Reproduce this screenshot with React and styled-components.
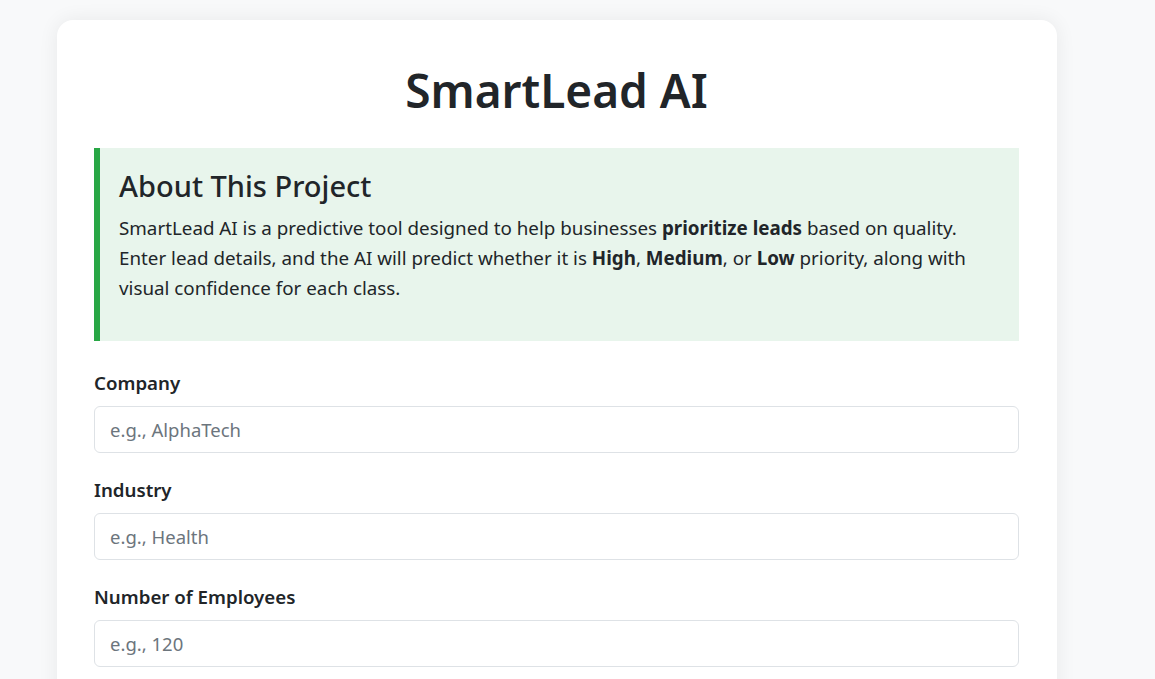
import React from 'react';
import styled, { createGlobalStyle } from 'styled-components';

const GlobalStyle = createGlobalStyle`
  html, body {
    margin: 0;
    padding: 0;
    background: #f8f9fa;
    color: #212529;
    font-family: "Noto Sans", "Open Sans", sans-serif;
  }
  * { box-sizing: border-box; }
`;

const Page = styled.div`
  padding: 20px 0 40px 57px;
`;

const Card = styled.div`
  width: 1000px;
  background: #fff;
  border-radius: 16px;
  box-shadow: 0 0 20px rgba(0, 0, 0, 0.07);
  padding: 43px 38px 40px 37px;
`;

const Title = styled.h1`
  margin: 0 0 30px;
  text-align: center;
  font-size: 46px;
  line-height: 1.2;
  font-weight: 600;
`;

const About = styled.section`
  background: #e8f5ec;
  border-left: 6px solid #28a745;
  padding: 21px 20px 20px 19px;
  margin-bottom: 28px;
`;

const AboutTitle = styled.h2`
  margin: 0 0 9px;
  font-size: 29px;
  line-height: 1.2;
  font-weight: 500;
`;

const AboutText = styled.p`
  margin: 0 0 18px;
  font-size: 18.8px;
  line-height: 30px;
`;

const Field = styled.div`
  margin-bottom: 23px;
`;

const Label = styled.label`
  display: block;
  font-size: 18.7px;
  line-height: 27px;
  font-weight: 600;
  margin-bottom: 10px;
`;

const Input = styled.input`
  display: block;
  width: 100%;
  height: 47px;
  padding: 0 15px;
  font-family: inherit;
  font-size: 18.5px;
  color: #212529;
  background: #fff;
  border: 1px solid #dee2e6;
  border-radius: 6px;
  outline: none;
  &::placeholder { color: #6c757d; }
`;

const fields = [
  { id: 'company', label: 'Company', placeholder: 'e.g., AlphaTech' },
  { id: 'industry', label: 'Industry', placeholder: 'e.g., Health' },
  { id: 'employees', label: 'Number of Employees', placeholder: 'e.g., 120' },
  { id: 'revenue', label: 'Annual Revenue', placeholder: 'e.g., 500000' },
];

export default function App() {
  return (
    <Page>
      <GlobalStyle />
      <Card>
        <Title>SmartLead AI</Title>
        <About>
          <AboutTitle>About This Project</AboutTitle>
          <AboutText>
            SmartLead AI is a predictive tool designed to help businesses <b>prioritize leads</b> based on quality.
            Enter lead details, and the AI will predict whether it is <b>High</b>, <b>Medium</b>, or <b>Low</b> priority,
            along with visual confidence for each class.
          </AboutText>
        </About>
        {fields.map((f) => (
          <Field key={f.id}>
            <Label htmlFor={f.id}>{f.label}</Label>
            <Input id={f.id} placeholder={f.placeholder} />
          </Field>
        ))}
      </Card>
    </Page>
  );
}
